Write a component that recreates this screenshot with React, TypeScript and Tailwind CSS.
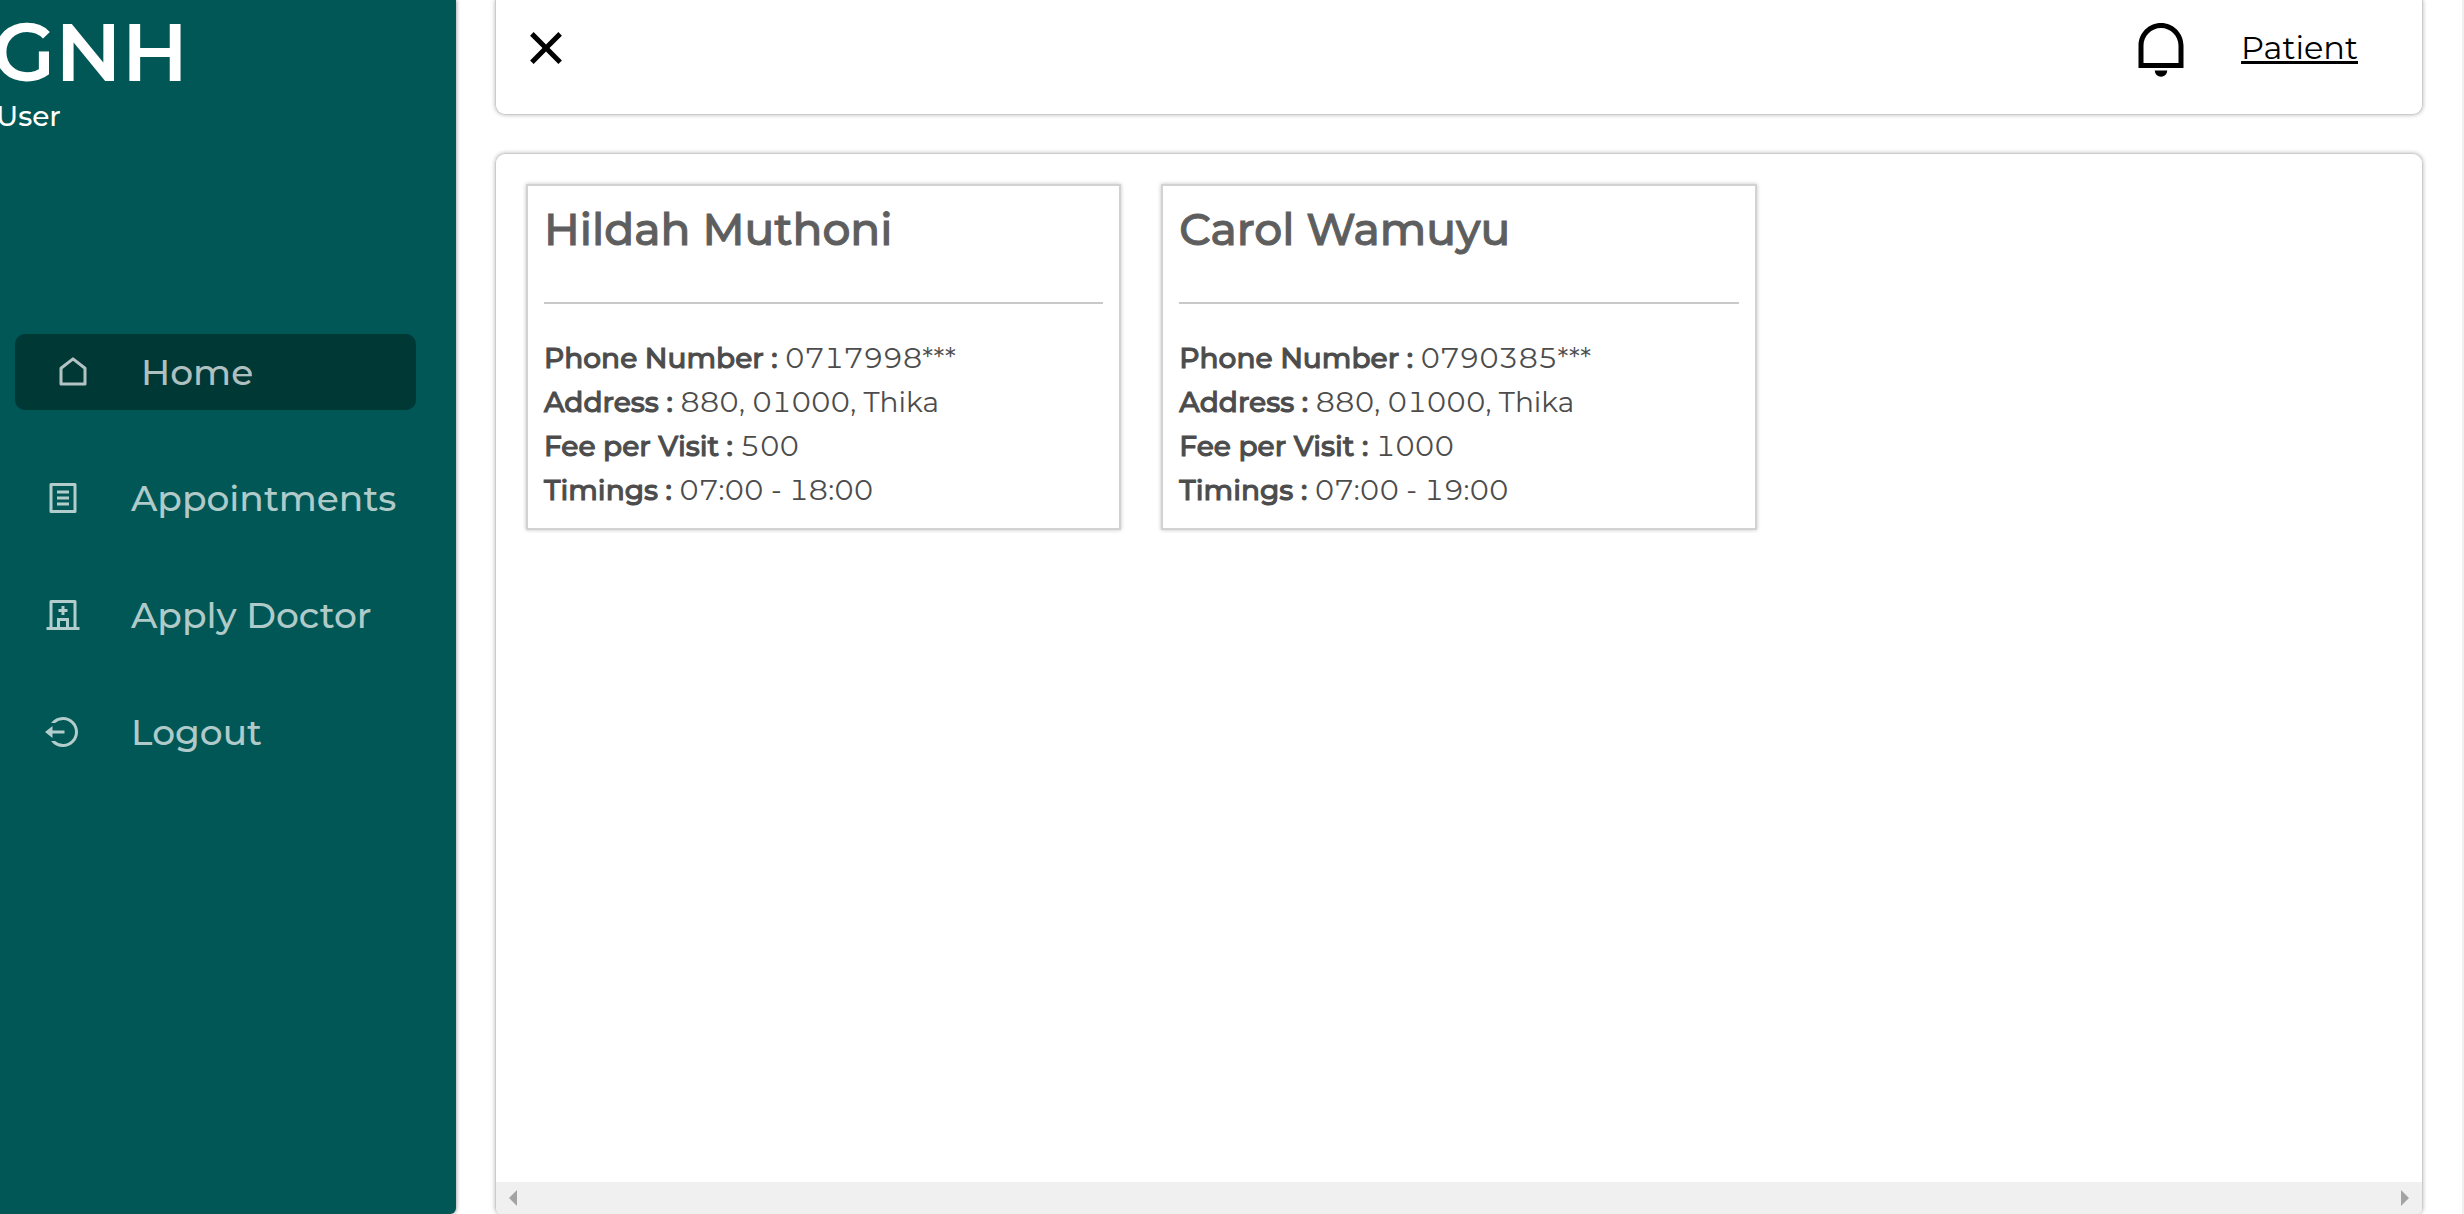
import type { ReactNode } from "react";

const icons = {
  home: "M21 20a1 1 0 0 1-1 1H4a1 1 0 0 1-1-1V9.49a1 1 0 0 1 .386-.79l8-6.222a1 1 0 0 1 1.228 0l8 6.222a1 1 0 0 1 .386.79V20zm-2-1V9.978l-7-5.444-7 5.444V19h14z",
  list: "M20 22H4a1 1 0 0 1-1-1V3a1 1 0 0 1 1-1h16a1 1 0 0 1 1 1v18a1 1 0 0 1-1 1zm-1-2V4H5v16h14zM8 7h8v2H8V7zm0 4h8v2H8v-2zm0 4h8v2H8v-2z",
  hospital:
    "M8 20v-6h8v6h3V4H5v16h3zm2 0h4v-4h-4v4zm11 0h2v2H1v-2h2V3a1 1 0 0 1 1-1h16a1 1 0 0 1 1 1v17zM11 8V6h2v2h2v2h-2v2h-2v-2H9V8h2z",
  logout:
    "M5 11h8v2H5v3l-5-4 5-4v3zm-1 7h2.708a8 8 0 1 0 0-12H4A9.985 9.985 0 0 1 12 2c5.523 0 10 4.477 10 10s-4.477 10-10 10a9.985 9.985 0 0 1-8-4z",
  bell: "M5 18h14v-6.969C19 7.148 15.866 4 12 4s-7 3.148-7 7.031V18zm7-16c4.97 0 9 4.043 9 9.031V20H3v-8.969C3 6.043 7.03 2 12 2zM9.5 21h5a2.5 2.5 0 1 1-5 0z",
  close:
    "M12 10.586l4.95-4.95 1.414 1.414-4.95 4.95 4.95 4.95-1.414 1.414-4.95-4.95-4.95 4.95-1.414-1.414 4.95-4.95-4.95-4.95L7.05 5.636z",
};

function Icon({ name, className }: { name: keyof typeof icons; className: string }) {
  return (
    <svg viewBox="0 0 24 24" fill="currentColor" aria-hidden="true" className={className}>
      <path d={icons[name]} />
    </svg>
  );
}

const menu: { label: string; icon: keyof typeof icons }[] = [
  { label: "Appointments", icon: "list" },
  { label: "Apply Doctor", icon: "hospital" },
  { label: "Logout", icon: "logout" },
];

const doctors = [
  { name: "Hildah Muthoni", phone: "0717998***", address: "880, 01000, Thika", fee: "500", timings: "07:00 - 18:00" },
  { name: "Carol Wamuyu", phone: "0790385***", address: "880, 01000, Thika", fee: "1000", timings: "07:00 - 19:00" },
];

function Detail({ label, children }: { label: string; children: ReactNode }) {
  return (
    <p className="text-[28px] leading-[44px] text-[#4c4c4c] tabular-nums">
      <b className="font-medium [-webkit-text-stroke:1px]">{label} :</b> {children}
    </p>
  );
}

function Sidebar() {
  return (
    <aside className="w-[456px] shrink-0 overflow-hidden rounded-br-md bg-[#005755] shadow-[0_0_4px_gray]">
      <div className="h-[334px] pt-3 text-white">
        <h1 className="-ml-2 text-[82px] leading-[80px] font-semibold">GNH</h1>
        <p className="mt-2 -ml-1 text-[28px] leading-8 font-medium">User</p>
      </div>
      <nav className="flex flex-col gap-[41px] text-4xl font-medium text-white/70">
        <a href="#home" className="mr-10 mb-[9px] ml-[15px] flex h-[76px] items-center gap-[50px] rounded-[10px] bg-[#003836] pl-10">
          <Icon name="home" className="size-9" />
          Home
        </a>
        {menu.map((item) => (
          <a key={item.label} href="#menu" className="flex h-[76px] items-center gap-[50px] pl-[45px]">
            <Icon name={item.icon} className="size-9" />
            {item.label}
          </a>
        ))}
      </nav>
    </aside>
  );
}

export default function App() {
  return (
    <div className="flex min-h-screen border-r-2 border-[#f0f0f0] bg-white font-['Montserrat','Inter',sans-serif]">
      <Sidebar />
      <main className="flex min-w-0 flex-1 flex-col gap-[38px] px-[39px]">
        <header className="flex items-center justify-between rounded-b-[10px] border border-t-0 border-[#cccccc] pt-[18px] pr-16 pb-9 pl-5 text-black shadow-[0_0_4px_#b8b8b8]">
          <button type="button" aria-label="Close menu">
            <Icon name="close" className="size-[60px]" />
          </button>
          <div className="flex items-center gap-[50px]">
            <button type="button" aria-label="Notifications">
              <Icon name="bell" className="size-[60px]" />
            </button>
            <a href="#profile" className="text-[32px] underline decoration-[3px] underline-offset-2">
              Patient
            </a>
          </div>
        </header>

        <section className="flex flex-1 flex-col overflow-hidden rounded-t-[10px] rounded-b-md border border-b-0 border-[#cccccc] shadow-[0_0_4px_#b8b8b8]">
          <div className="grid flex-1 grid-cols-3 items-start gap-10 p-[30px]">
            {doctors.map((d) => (
              <article key={d.name} className="border-2 border-[#d2d2d2] p-4 shadow-[0_0_4px_#c4c4c4]">
                <h2 className="text-[44px] leading-[54px] font-medium text-[#5e5e5e] [-webkit-text-stroke:1px]">
                  {d.name}
                </h2>
                <hr className="mt-[46px] mb-8 border-t-2 border-[#c9c9c9]" />
                <Detail label="Phone Number">{d.phone}</Detail>
                <Detail label="Address">{d.address}</Detail>
                <Detail label="Fee per Visit">{d.fee}</Detail>
                <Detail label="Timings">{d.timings}</Detail>
              </article>
            ))}
          </div>
          <div className="flex h-8 items-center justify-between bg-[#f0f0f0] px-[13px] text-[#a3a3a3]">
            <svg viewBox="0 0 8 16" fill="currentColor" className="h-4 w-2" aria-hidden="true">
              <path d="M8 0v16L0 8z" />
            </svg>
            <svg viewBox="0 0 8 16" fill="currentColor" className="h-4 w-2" aria-hidden="true">
              <path d="M0 0v16l8-8z" />
            </svg>
          </div>
        </section>
      </main>
    </div>
  );
}
